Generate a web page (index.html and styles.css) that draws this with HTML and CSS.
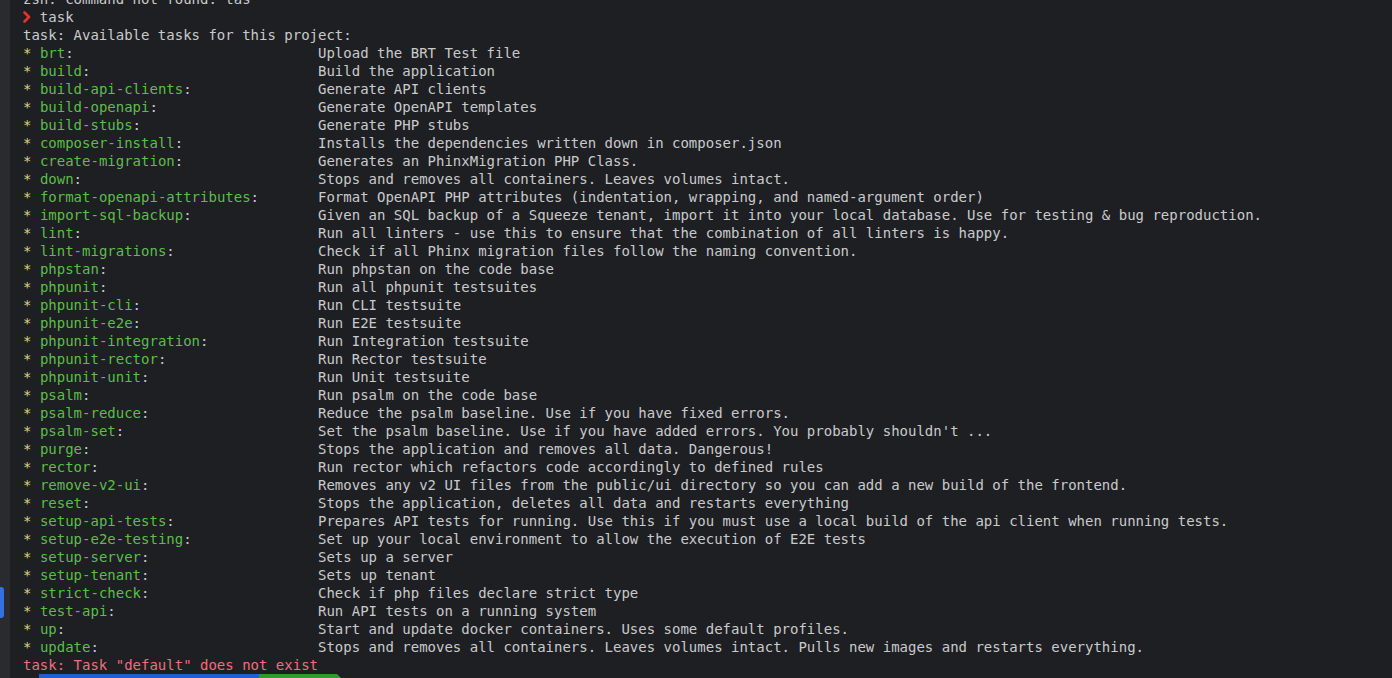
FILE: index.html
```html
<!DOCTYPE html>
<html>
<head>
<meta charset="utf-8">
<link rel="stylesheet" href="styles.css">
</head>
<body>
<div class="window">
  <aside class="gutter"><div class="marker"></div></aside>
  <main class="term">
    <div class="line">zsh: command not found: tas</div>
    <div class="line"><span class="prompt"><svg width="8" height="12" viewBox="0 0 8 12"><path d="M1.5 1.5 L6 6 L1.5 10.5" fill="none" stroke="#e5322b" stroke-width="2.6" stroke-linecap="round" stroke-linejoin="round"/></svg></span> task</div>
    <div class="line">task: Available tasks for this project:</div>
    <div id="tasks"></div>
    <div class="line err">task: Task "default" does not exist</div>
    <div class="line pl"><span class="pl-pad"></span><span class="pl-blue"></span><span class="pl-green"></span><span class="pl-arrow"></span></div>
  </main>
</div>
<script>
const tasks = [
["brt","Upload the BRT Test file"],
["build","Build the application"],
["build-api-clients","Generate API clients"],
["build-openapi","Generate OpenAPI templates"],
["build-stubs","Generate PHP stubs"],
["composer-install","Installs the dependencies written down in composer.json"],
["create-migration","Generates an PhinxMigration PHP Class."],
["down","Stops and removes all containers. Leaves volumes intact."],
["format-openapi-attributes","Format OpenAPI PHP attributes (indentation, wrapping, and named-argument order)"],
["import-sql-backup","Given an SQL backup of a Squeeze tenant, import it into your local database. Use for testing & bug reproduction."],
["lint","Run all linters - use this to ensure that the combination of all linters is happy."],
["lint-migrations","Check if all Phinx migration files follow the naming convention."],
["phpstan","Run phpstan on the code base"],
["phpunit","Run all phpunit testsuites"],
["phpunit-cli","Run CLI testsuite"],
["phpunit-e2e","Run E2E testsuite"],
["phpunit-integration","Run Integration testsuite"],
["phpunit-rector","Run Rector testsuite"],
["phpunit-unit","Run Unit testsuite"],
["psalm","Run psalm on the code base"],
["psalm-reduce","Reduce the psalm baseline. Use if you have fixed errors."],
["psalm-set","Set the psalm baseline. Use if you have added errors. You probably shouldn't ..."],
["purge","Stops the application and removes all data. Dangerous!"],
["rector","Run rector which refactors code accordingly to defined rules"],
["remove-v2-ui","Removes any v2 UI files from the public/ui directory so you can add a new build of the frontend."],
["reset","Stops the application, deletes all data and restarts everything"],
["setup-api-tests","Prepares API tests for running. Use this if you must use a local build of the api client when running tests."],
["setup-e2e-testing","Set up your local environment to allow the execution of E2E tests"],
["setup-server","Sets up a server"],
["setup-tenant","Sets up tenant"],
["strict-check","Check if php files declare strict type"],
["test-api","Run API tests on a running system"],
["up","Start and update docker containers. Uses some default profiles."],
["update","Stops and removes all containers. Leaves volumes intact. Pulls new images and restarts everything."]
];
const box = document.getElementById('tasks');
for (const [name, desc] of tasks) {
  const row = document.createElement('div');
  row.className = 'task';
  const n = document.createElement('span');
  n.className = 'name';
  n.innerHTML = '<span class="star">*</span> <span class="green"></span>:';
  n.querySelector('.green').textContent = name;
  const d = document.createElement('span');
  d.className = 'desc';
  d.textContent = desc;
  row.append(n, d);
  box.append(row);
}
</script>
</body>
</html>
```
FILE: styles.css
```css
html, body {
  margin: 0;
  padding: 0;
  background: #1e1f22;
  overflow: hidden;
}
.window {
  display: flex;
  height: 678px;
  overflow: hidden;
}
.gutter {
  width: 10px;
  flex: none;
  background: #2a2b2e;
  display: flex;
  flex-direction: column;
}
.marker {
  margin-top: 587px;
  width: 4px;
  height: 31px;
  background: #3470e4;
  border-radius: 0 3px 3px 0;
}
.term {
  flex: 1;
  margin-top: -10px;
  padding-left: 13px;
  font-family: "DejaVu Sans Mono", monospace;
  font-size: 14px;
  line-height: 18px;
  color: #c9cacc;
}
.line {
  height: 18px;
  white-space: pre;
}
.prompt {
  display: inline-block;
  width: 1ch;
}
.prompt svg {
  vertical-align: -1px;
}
.task {
  display: flex;
  height: 18px;
  white-space: pre;
}
.name {
  width: 35ch;
  flex: none;
}
.star {
  color: #ddd38c;
}
.green {
  color: #5cbd4b;
}
.err {
  color: #ee6f7b;
}
.pl {
  display: flex;
  align-items: stretch;
}
.pl-pad {
  width: 16px;
}
.pl-blue {
  width: 220px;
  background: #1f5fd0;
}
.pl-green {
  width: 78px;
  background: #2f9b2f;
}
.pl-arrow {
  width: 0;
  height: 0;
  border-top: 9px solid transparent;
  border-bottom: 9px solid transparent;
  border-left: 9px solid #2f9b2f;
}
```
